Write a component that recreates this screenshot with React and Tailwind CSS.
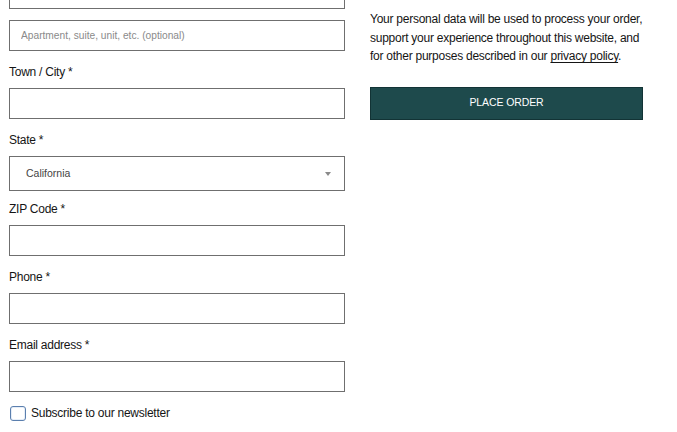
export default function App() {
  const font = { fontFamily: '"Liberation Sans", Arial, sans-serif' };
  return (
    <div className="w-[677px] h-[432px] overflow-hidden bg-white text-[#151515] relative" style={font}>
      <div className="flex items-start gap-[25px] pl-[9px] -mt-[23px]">
        {/* Billing form */}
        <div className="w-[336px] flex flex-col shrink-0">
          <input className="h-[32px] w-full border border-[#6f6f6f] outline-none" />
          <input
            placeholder="Apartment, suite, unit, etc. (optional)"
            className="mt-[11px] h-[31px] w-full border border-[#6f6f6f] px-[11px] text-[10.2px] placeholder:text-[#8a8a8a] outline-none"
          />
          <Field label="Town / City *" />
          <label className="mt-[11px] text-[12px] tracking-[-0.25px] leading-[20px] mb-[6px]">State *</label>
          <div className="h-[35px] w-full border border-[#6f6f6f] flex items-center justify-between pl-[16px] pr-[13px]">
            <span className="text-[10.5px] text-[#444]">California</span>
            <svg width="6" height="4" viewBox="0 0 6 4"><path d="M0 0h6L3 4z" fill="#8a8a8a" /></svg>
          </div>
          <Field label="ZIP Code *" gap="mt-[8px]" />
          <Field label="Phone *" />
          <Field label="Email address *" />
          <label className="mt-[13px] flex items-center gap-[5px] text-[12px] tracking-[-0.25px] leading-[16px]">
            <span className="ml-[1px] w-[16px] h-[15px] rounded-[3px] border-[1.5px] border-[#5b7fae] bg-white shadow-[inset_0_0_0_1px_#e6eef8]" />
            Subscribe to our newsletter
          </label>
        </div>

        {/* Order summary */}
        <div className="w-[274px] pt-[33px]">
          <p className="text-[12px] tracking-[-0.25px] leading-[18.5px]">
            Your personal data will be used to process your order, support your experience throughout this website, and for other purposes described in our{' '}
            <a className="underline underline-offset-2">privacy policy</a>.
          </p>
          <button className="mt-[21px] w-[273px] h-[33px] bg-[#1e4a4c] border border-[#123335] text-white text-[10.5px] tracking-[-0.1px]">
            PLACE ORDER
          </button>
        </div>
      </div>
    </div>
  );
}

function Field({ label, gap = 'mt-[11px]' }) {
  return (
    <>
      <label className={`${gap} text-[12px] tracking-[-0.25px] leading-[20px] mb-[6px]`}>{label}</label>
      <input className="h-[31px] w-full border border-[#6f6f6f] outline-none" />
    </>
  );
}
